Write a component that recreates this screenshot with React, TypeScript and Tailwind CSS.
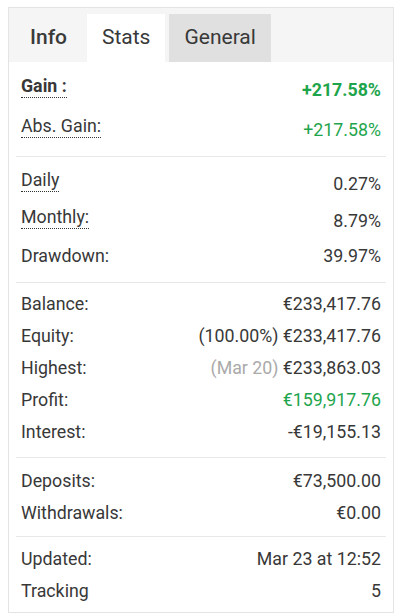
import React from "react";

type Row = {
  label: string;
  value: React.ReactNode;
  tip?: boolean;
  bold?: boolean;
  green?: boolean;
};

const sections: { rows: Row[]; h: string; pad: string }[] = [
  {
    h: "h-[40px]",
    pad: "pt-[7px] pb-[7px]",
    rows: [
      { label: "Gain :", value: "+217.58%", tip: true, bold: true, green: true },
      { label: "Abs. Gain:", value: "+217.58%", tip: true, green: true },
    ],
  },
  {
    h: "h-[37px]",
    pad: "pt-[7px] pb-[7px]",
    rows: [
      { label: "Daily", value: "0.27%", tip: true },
      { label: "Monthly:", value: "8.79%", tip: true },
      { label: "Drawdown:", value: "39.97%" },
    ],
  },
  {
    h: "h-[32px]",
    pad: "pt-[5px] pb-[9px]",
    rows: [
      { label: "Balance:", value: "€233,417.76" },
      { label: "Equity:", value: "(100.00%) €233,417.76" },
      {
        label: "Highest:",
        value: (
          <>
            <span className="text-[#aaaaaa]">(Mar 20)</span> €233,863.03
          </>
        ),
      },
      { label: "Profit:", value: "€159,917.76", green: true },
      { label: "Interest:", value: "-€19,155.13" },
    ],
  },
  {
    h: "h-[32px]",
    pad: "pt-[7px] pb-[7px]",
    rows: [
      { label: "Deposits:", value: "€73,500.00" },
      { label: "Withdrawals:", value: "€0.00" },
    ],
  },
  {
    h: "h-[32px]",
    pad: "pt-[6px] pb-[5px]",
    rows: [
      { label: "Updated:", value: "Mar 23 at 12:52" },
      { label: "Tracking", value: "5" },
    ],
  },
];

function StatRow({ row, h }: { row: Row; h: string }) {
  return (
    <div className={`flex items-center justify-between px-[5px] ${h}`}>
      {row.tip ? (
        <span
          className={`-mt-[5px] border-b border-dotted border-[#333] leading-[22px] ${
            row.bold ? "font-bold" : ""
          }`}
        >
          {row.label}
        </span>
      ) : (
        <span>{row.label}</span>
      )}
      <span
        className={`${row.green ? "text-[#1ea54c]" : ""} ${row.bold ? "font-bold" : ""} ${
          row.tip ? "mt-[3px]" : ""
        }`}
      >
        {row.value}
      </span>
    </div>
  );
}

export default function App() {
  return (
    <div className="min-h-screen bg-white pt-[7px] px-[8px] font-['Roboto',sans-serif] text-[17.8px] text-[#383838]">
      <div className="border border-[#e4e4e4] w-[386px]">
        <div className="flex items-end h-[54px] bg-[#f5f5f5] text-[21px]">
          <div className="h-[48px] flex items-center pl-[21px] pr-[20px] font-medium text-[#3a3a3a]">
            Info
          </div>
          <div className="h-[48px] flex items-center px-[15px] bg-white">Stats</div>
          <div className="h-[48px] flex items-center ml-[4px] px-[15px] bg-[#e0e0e0]">General</div>
        </div>
        <div className="px-[7px]">
          {sections.map((s, i) => (
            <div
              key={i}
              className={`${s.pad} ${i < sections.length - 1 ? "border-b border-[#e8e8e8]" : ""}`}
            >
              {s.rows.map((r) => (
                <StatRow key={r.label} row={r} h={s.h} />
              ))}
            </div>
          ))}
        </div>
      </div>
    </div>
  );
}
